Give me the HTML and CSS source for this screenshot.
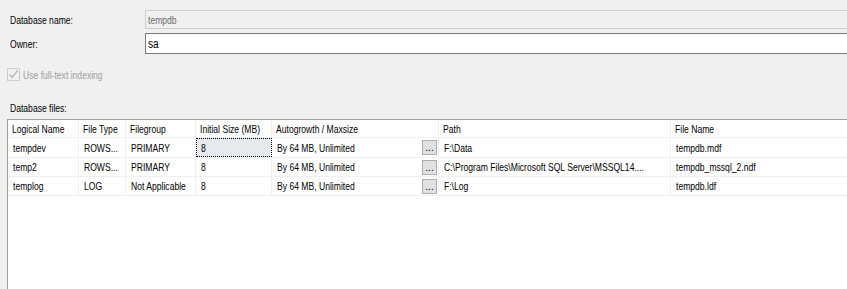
FILE: index.html
```html
<!DOCTYPE html>
<html>
<head>
<meta charset="utf-8">
<link rel="stylesheet" href="styles.css">
</head>
<body>
<div class="page">
  <div class="field field-name">
    <span class="label"><span class="t">Database name:</span></span>
    <div class="input input-disabled"><span class="t">tempdb</span></div>
  </div>
  <div class="field field-owner">
    <span class="label"><span class="t">Owner:</span></span>
    <div class="input input-active"><span class="t">sa</span></div>
  </div>
  <div class="check">
    <span class="box">
      <svg width="13" height="13" viewBox="0 0 13 13"><path d="M2.5 6.5 L5 9.5 L10.5 2.5" fill="none" stroke="#b5b5b5" stroke-width="1.3"/></svg>
    </span>
    <span class="check-label"><span class="t">Use full-text indexing</span></span>
  </div>
  <div class="files-label"><span class="t">Database files:</span></div>
  <div class="grid">
    <div class="row head">
      <div class="c c1"><span class="t">Logical Name</span></div>
      <div class="c c2"><span class="t">File Type</span></div>
      <div class="c c3"><span class="t">Filegroup</span></div>
      <div class="c c4"><span class="t">Initial Size (MB)</span></div>
      <div class="c c5"><span class="t">Autogrowth / Maxsize</span></div>
      <div class="c c6"><span class="t">Path</span></div>
      <div class="c c7"><span class="t">File Name</span></div>
    </div>
    <div class="row r1">
      <div class="c c1"><span class="t">tempdev</span></div>
      <div class="c c2"><span class="t">ROWS...</span></div>
      <div class="c c3"><span class="t">PRIMARY</span></div>
      <div class="c c4 focus"><span class="t">8</span></div>
      <div class="c c5"><span class="t">By 64 MB, Unlimited</span><span class="btn">...</span></div>
      <div class="c c6"><span class="t">F:\Data</span></div>
      <div class="c c7"><span class="t">tempdb.mdf</span></div>
    </div>
    <div class="row">
      <div class="c c1"><span class="t">temp2</span></div>
      <div class="c c2"><span class="t">ROWS...</span></div>
      <div class="c c3"><span class="t">PRIMARY</span></div>
      <div class="c c4"><span class="t">8</span></div>
      <div class="c c5"><span class="t">By 64 MB, Unlimited</span><span class="btn">...</span></div>
      <div class="c c6"><span class="t">C:\Program Files\Microsoft SQL Server\MSSQL14....</span></div>
      <div class="c c7"><span class="t">tempdb_mssql_2.ndf</span></div>
    </div>
    <div class="row">
      <div class="c c1"><span class="t">templog</span></div>
      <div class="c c2"><span class="t">LOG</span></div>
      <div class="c c3"><span class="t">Not Applicable</span></div>
      <div class="c c4"><span class="t">8</span></div>
      <div class="c c5"><span class="t">By 64 MB, Unlimited</span><span class="btn">...</span></div>
      <div class="c c6"><span class="t">F:\Log</span></div>
      <div class="c c7"><span class="t">tempdb.ldf</span></div>
    </div>
  </div>
</div>
</body>
</html>
```
FILE: styles.css
```css
html, body {
  margin: 0;
  padding: 0;
  background: #f0f0f0;
  overflow: hidden;
}
body {
  width: 847px;
  height: 289px;
  font-family: "Liberation Sans", Arial, sans-serif;
  font-size: 11px;
  color: #000;
}
.t {
  display: inline-block;
  transform: scaleX(0.78);
  transform-origin: 0 50%;
  white-space: nowrap;
}
.page {
  padding-top: 10px;
}
.field {
  display: flex;
  align-items: center;
}
.label {
  width: 135px;
  padding-left: 10px;
  flex: none;
}
.input {
  flex: none;
  width: 720px;
  box-sizing: border-box;
  padding-left: 2px;
  display: flex;
  align-items: center;
}
.input-disabled {
  height: 19px;
  border: 1px solid #cfcfcf;
  border-right: none;
  background: #f0f0f0;
  color: #6d6d6d;
}
.field-owner {
  margin-top: 4px;
}
.input-active {
  height: 21px;
  border: 1px solid #7a7a7a;
  border-right: none;
  background: #fff;
  font-size: 12px;
}
.input-active .t {
  transform: scaleX(0.85);
}
.check {
  display: flex;
  align-items: center;
  margin-top: 14px;
  padding-left: 7px;
  height: 13px;
}
.box {
  width: 13px;
  height: 13px;
  box-sizing: border-box;
  border: 1px solid #cccccc;
  background: #f0f0f0;
  display: flex;
}
.box svg {
  margin: -1px;
}
.check-label {
  margin-left: 3px;
  color: #a0a0a0;
}
.files-label {
  margin-top: 21px;
  padding-left: 10px;
  height: 13px;
  line-height: 13px;
}
.grid {
  margin-top: 4px;
  margin-left: 7px;
  width: 900px;
  height: 200px;
  background: #fff;
  border-top: 1px solid #a0a0a0;
  border-left: 1px solid #a0a0a0;
}
.row {
  display: flex;
  height: 18px;
  border-bottom: 1px solid #f0f0f0;
}
.row.head {
  height: 17px;
}
.row.r1 {
  height: 19px;
}
.c {
  flex: none;
  box-sizing: border-box;
  border-right: 1px solid #f0f0f0;
  padding-left: 5px;
  display: flex;
  align-items: center;
  white-space: nowrap;
  overflow: hidden;
}
.head .c {
  padding-left: 4px;
}
.c1 { width: 71px; }
.c2 { width: 47px; }
.c3 { width: 70px; }
.c4 { width: 76px; }
.c5 { width: 167px; justify-content: space-between; padding-right: 1px; }
.c6 { width: 232px; }
.c7 { width: 230px; }
.c5 .t { flex: none; }
.focus {
  background: #e6eaee;
  outline: 1px dotted #000;
  outline-offset: -1px;
}
.btn {
  flex: none;
  width: 15px;
  height: 15px;
  box-sizing: border-box;
  background: #e1e1e1;
  border: 1px solid #adadad;
  font-size: 10px;
  display: flex;
  align-items: flex-end;
  justify-content: center;
  line-height: 10px;
  padding-bottom: 1px;
}
```
